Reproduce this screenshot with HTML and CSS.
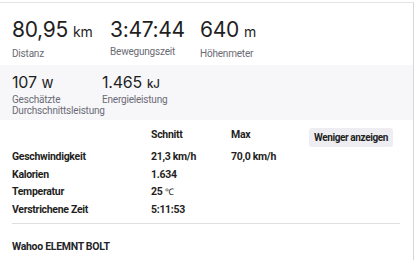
FILE: index.html
```html
<!DOCTYPE html>
<html lang="de">
<head>
<meta charset="utf-8">
<link rel="stylesheet" href="styles.css">
</head>
<body>
<div class="panel">
  <section class="primary">
    <div class="stat s1">
      <div class="big">80,95<span class="unit">km</span></div>
      <div class="label">Distanz</div>
    </div>
    <div class="stat s2">
      <div class="big">3:47:44</div>
      <div class="label">Bewegungszeit</div>
    </div>
    <div class="stat">
      <div class="big">640<span class="unit">m</span></div>
      <div class="label">Höhenmeter</div>
    </div>
  </section>
  <section class="secondary">
    <div class="stat s1b">
      <div class="mid">107<span class="unit2">W</span></div>
      <div class="label">Geschätzte<br>Durchschnittsleistung</div>
    </div>
    <div class="stat">
      <div class="mid">1.465<span class="unit2">kJ</span></div>
      <div class="label">Energieleistung</div>
    </div>
  </section>
  <section class="details">
    <div class="grid">
      <div class="h"></div>
      <div class="h">Schnitt</div>
      <div class="h">Max</div>
      <div class="btncell"><button class="btn">Weniger anzeigen</button></div>

      <div class="k">Geschwindigkeit</div>
      <div class="v">21,3 km/h</div>
      <div class="v">70,0 km/h</div>
      <div></div>

      <div class="k">Kalorien</div>
      <div class="v">1.634</div>
      <div class="v"></div>
      <div></div>

      <div class="k">Temperatur</div>
      <div class="v">25 <span class="deg">℃</span></div>
      <div class="v"></div>
      <div></div>

      <div class="k">Verstrichene Zeit</div>
      <div class="v">5:11:53</div>
      <div class="v"></div>
      <div></div>
    </div>
    <div class="divider"></div>
    <div class="device">Wahoo ELEMNT BOLT</div>
  </section>
</div>
</body>
</html>
```
FILE: styles.css
```css
html, body {
  margin: 0;
  padding: 0;
  background: #ffffff;
}
body {
  font-family: "Roboto", "Liberation Sans", sans-serif;
  color: #242428;
  width: 414px;
  height: 261px;
  overflow: hidden;
}
.panel {
  margin-top: 2px;
  border-top: 1px solid #e3e3e8;
  border-right: 1px solid #d6d6dc;
  height: 258px;
  box-sizing: border-box;
}
.primary {
  display: flex;
  padding: 15px 0 0 12px;
  height: 62px;
  box-sizing: border-box;
  background: #fff;
}
.s1 { width: 98px; }
.s2 { width: 90px; }
.big {
  font-family: "Inter", "Roboto", sans-serif;
  font-size: 21px;
  line-height: 24px;
  font-weight: 400;
  letter-spacing: -0.3px;
  color: #1f1f23;
  white-space: nowrap;
}
.unit {
  font-size: 14px;
  margin-left: 5px;
  letter-spacing: 0;
}
.label {
  font-size: 10px;
  line-height: 11px;
  letter-spacing: -0.2px;
  color: #6b6b74;
  margin-top: 4px;
  white-space: nowrap;
}
.secondary {
  display: flex;
  background: #f7f7fa;
  padding: 8px 0 0 12px;
  height: 55px;
  box-sizing: border-box;
}
.s1b { width: 90px; }
.mid {
  font-family: "Inter", "Roboto", sans-serif;
  font-size: 16px;
  line-height: 18px;
  letter-spacing: -0.2px;
  color: #1f1f23;
  white-space: nowrap;
}
.unit2 {
  font-size: 11.5px;
  font-weight: 500;
  margin-left: 5px;
}
.secondary .label { margin-top: 1px; }
.details {
  padding: 4px 13px 0 12px;
}
.grid {
  display: grid;
  grid-template-columns: 139px 80px 78px auto;
  grid-template-rows: 24px repeat(4, 17.5px);
  align-items: center;
  font-size: 10.5px;
  font-weight: 700;
  letter-spacing: -0.3px;
  color: #1f1f23;
}
.h {
  align-self: start;
  padding-top: 4px;
}
.btncell {
  align-self: start;
  display: flex;
  justify-content: flex-start;
}
.btn {
  font-family: inherit;
  font-size: 10px;
  font-weight: 700;
  letter-spacing: -0.4px;
  color: #1f1f23;
  background: #eeeef2;
  border: none;
  border-radius: 3px;
  width: 84px;
  height: 19px;
  padding: 0;
  margin-top: 4px;
  white-space: nowrap;
  text-align: center;
}
.deg { font-size: 9px; font-weight: 400; }
.divider {
  height: 1px;
  background: #dedee3;
  margin-top: 5px;
}
.device {
  font-size: 10.5px;
  line-height: 13px;
  font-weight: 700;
  letter-spacing: -0.3px;
  margin-top: 16px;
}
```
